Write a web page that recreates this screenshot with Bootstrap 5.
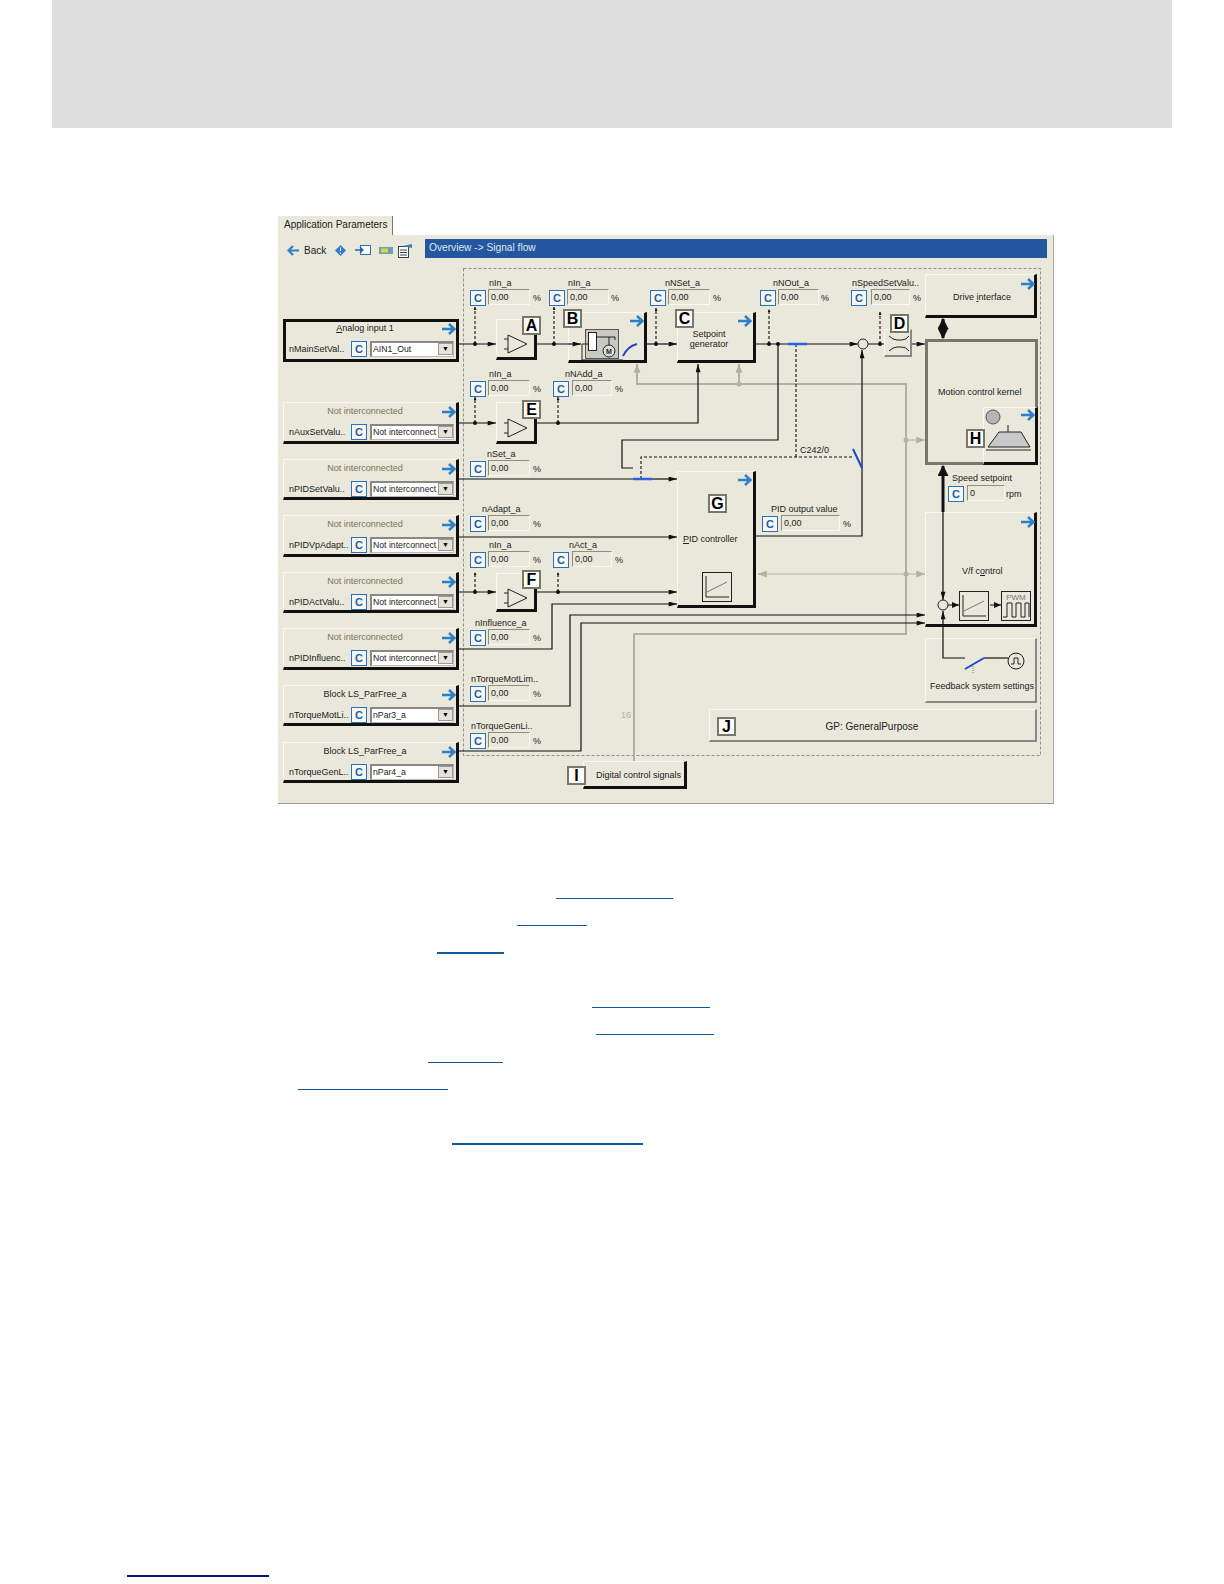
<!DOCTYPE html>
<html lang="en">
<head>
  <meta charset="UTF-8">
  <meta name="viewport" content="width=device-width, initial-scale=1.0">
  <title>Signal flow</title>
  <link rel="stylesheet" href="https://cdn.jsdelivr.net/npm/bootstrap@5.3.2/dist/css/bootstrap.min.css">
  <style>
    body { background: #fff; font-family: "Liberation Sans", Arial, sans-serif; }
    .top-band { height: 128px; margin: 0 52px; background: #dfdfdf; }
    .sf-window { width: 776px; margin: 88px 0 0 278px; }
    .sf-tabs { border: 0; }
    .sf-tabs .nav-link, .sf-tabs .nav-link.active { height: 19px; width: 115px; margin: 0; padding: 1px 0 0 6px; font-size: 10px; line-height: 16px; color: #222; background: #e9e8da; border: 0; border-right: 1.5px solid #777; border-radius: 0; white-space: nowrap; }
    .sf-panel { height: 569px; background: #e9e8da; border-right: 1px solid #aaa; border-bottom: 1px solid #999; }
    .sf-toolbar { height: 23px; padding-top: 4px; }
    .sf-tools { width: 147px; height: 19px; padding: 3px 0 0 9px; font-size: 10px; color: #222; }
    .sf-title { height: 19px; margin-right: 6px; padding-left: 4px; background: #2557a0; color: #dfe6f0; font-size: 10.2px; line-height: 18px; }
    .sf-layer { left: 0; top: 0; width: 776px; height: 569px; }
    .sf-node { font-size: 9px; line-height: 11px; color: #222; white-space: nowrap; }
    .sf-big { font-size: 10px; }
    .sf-block { background: #e9e8da; border-top: 1px solid #f8f8f0; border-left: 1px solid #f8f8f0; border-right: 3px solid #111; border-bottom: 3px solid #111; }
    .sf-closed { border-top: 3px solid #111; border-left: 3px solid #111; }
    .sf-flat { background: #e9e8da; border: 1px solid #f8f8f0; border-right: 2px solid #888; border-bottom: 2px solid #888; }
    .sf-kernel { background: #e9e8da; border: 3px solid #77776c; }
    .sf-letter { width: 19px; height: 19px; background: #fbfbf8; border: 2px solid #77776c; font-size: 16px; line-height: 15px; font-weight: 700; color: #000; text-align: center; }
    .sf-cbox { width: 16px; height: 16px; background: #f6f7f3; border: 1px solid #2b70b8; color: #1c5fa8; font-size: 11px; line-height: 14px; font-weight: 700; text-align: center; }
    .sf-field { height: 16px; padding-left: 2px; background: #e9e8da; border-top: 1px solid #8f8f80; border-left: 1px solid #8f8f80; border-right: 1px solid #f8f8f0; border-bottom: 1px solid #f8f8f0; font-size: 9px; line-height: 15px; color: #222; }
    .sf-select { width: 84px; height: 16px; padding-left: 1px; background: #fff; border-top: 2px solid #888; border-left: 2px solid #888; border-bottom: 1px solid #bbb; border-right: 1px solid #bbb; font-size: 8.7px; line-height: 12px; color: #222; white-space: nowrap; }
    .sf-value { flex: 1 1 auto; }
    .sf-drop { flex: 0 0 15px; height: 12px; background: #e4e3d6; border: 1px solid #999; color: #000; font-size: 7px; line-height: 10px; text-align: center; }
    .sf-muted { color: #77775a; }
    .link-stack { height: 248px; position: relative; }
    .link-rule { background: #0f5a9c; }
    .page-rule { width: 142px; height: 2px; margin: 523px 0 0 127px; background: #10107a; }
    svg text { font-family: "Liberation Sans", Arial, sans-serif; }
    .w { fill: none; stroke: #111; stroke-width: 1.2; }
    .d { fill: none; stroke: #111; stroke-width: 1.1; stroke-dasharray: 3 2; }
    .g { fill: none; stroke: #b0b0a4; stroke-width: 2; }
    .gt { fill: none; stroke: #b0b0a4; stroke-width: 1; }
    .t { fill: none; stroke: #111; stroke-width: 3; }
    .b { fill: none; stroke: #1f45d0; stroke-width: 2; }
    .i { fill: none; stroke: #222; stroke-width: 1; }
  </style>
</head>
<body>
  <div class="top-band"></div>

  <div class="sf-window">
    <ul class="nav nav-tabs sf-tabs">
      <li class="nav-item"><a class="nav-link active" href="#">Application Parameters</a></li>
    </ul>
    <div class="sf-panel position-relative">
      <div class="sf-toolbar d-flex">
        <div class="sf-tools d-flex align-items-center gap-1">
          <svg width="13" height="11" viewBox="0 0 13 11"><path d="M12 5.5H3M6 1L1.5 5.5L6 10" fill="none" stroke="#2f7fc8" stroke-width="2.2"/></svg>
          <span>Back</span>
          <svg class="ms-1" width="13" height="13" viewBox="0 0 13 13"><path d="M6.5 1L12 6.5L6.5 12L1 6.5z" fill="#2f7fc8"/><path d="M6.5 3.5V7M6.5 8.5V10" stroke="#fff"/></svg>
          <svg class="ms-1" width="16" height="12" viewBox="0 0 16 12"><rect x="5.5" y="1.5" width="10" height="9" fill="#fff" stroke="#2f6fa8"/><path d="M0 6H8M5 3L8 6L5 9" fill="none" stroke="#1d6aa8" stroke-width="1.3"/></svg>
          <svg class="ms-1" width="14" height="7" viewBox="0 0 14 7"><rect width="14" height="7" fill="#6f9fb8"/><rect x="2" y="1.5" width="7" height="4" fill="#d8d840"/></svg>
          <svg width="16" height="15" viewBox="0 0 16 15"><rect x="1.5" y="3.5" width="10" height="11" fill="#fff" stroke="#345"/><path d="M3 7H10M3 9.5H10M3 12H10" stroke="#345"/><path d="M6 3L15 1V5z" fill="#3a80b8"/></svg>
        </div>
        <div class="sf-title flex-grow-1">Overview -&gt; Signal flow</div>
      </div>

      <svg class="sf-layer position-absolute" viewBox="278 235 776 569">
        <defs>
          <marker id="ah" viewBox="0 0 10 6" refX="10" refY="3" markerWidth="9" markerHeight="5" markerUnits="userSpaceOnUse" orient="auto-start-reverse"><path d="M0 0L10 3L0 6z" fill="#111"/></marker>
          <marker id="as" viewBox="0 0 6 8" refX="6" refY="3" markerWidth="6" markerHeight="4" markerUnits="userSpaceOnUse" orient="auto"><path d="M0 0L6 3L0 6z" fill="#111"/></marker>
          <marker id="at" viewBox="0 0 10 10" refX="9" refY="5" markerWidth="11" markerHeight="11" markerUnits="userSpaceOnUse" orient="auto-start-reverse"><path d="M0 0L10 5L0 10z" fill="#111"/></marker>
          <marker id="ag" viewBox="0 0 10 8" refX="10" refY="4" markerWidth="9" markerHeight="7" markerUnits="userSpaceOnUse" orient="auto-start-reverse"><path d="M0 0L10 4L0 8z" fill="#b0b0a4"/></marker>
        </defs>
        <rect x="463.5" y="268.5" width="577" height="487" fill="none" stroke="#777" stroke-width=".8" stroke-dasharray="3 2"/>

        <!-- grey bus -->
        <path class="g" d="M634 761V634H906V384H637V364" marker-end="url(#ag)"/>
        <path class="g" d="M739 384V364" marker-end="url(#ag)"/>
        <path class="gt" d="M906 440H925" marker-end="url(#ag)"/>
        <path class="gt" d="M758 574H925" marker-start="url(#ag)" marker-end="url(#ag)"/>
        <g fill="#b0b0a4"><circle cx="739" cy="384" r="2.5"/><circle cx="906" cy="440" r="2.5"/><circle cx="906" cy="574" r="2.5"/></g>
        <text x="621" y="718" font-size="9" fill="#b0b0a4">16</text>

        <!-- main signal path -->
        <path class="w" d="M459 344H496" marker-end="url(#ah)"/>
        <path class="w" d="M537 344H582"/>
        <path class="w" d="M647 344H677" marker-end="url(#ah)"/>
        <path class="w" d="M756 344H858" marker-end="url(#ah)"/>
        <path class="w" d="M868 344H925" marker-end="url(#ah)"/>
        <path class="d" d="M475 344V307" marker-end="url(#as)"/>
        <path class="d" d="M554 344V307" marker-end="url(#as)"/>
        <path class="d" d="M656 344V308" marker-end="url(#as)"/>
        <path class="d" d="M769 344V309" marker-end="url(#as)"/>
        <path class="d" d="M880 344V312" marker-end="url(#as)"/>
        <path class="w" d="M778 344V440H622V468H633"/>
        <path class="d" d="M796 344V457M641 479V457H854"/>

        <!-- second line -->
        <path class="w" d="M459 423H496" marker-end="url(#ah)"/>
        <path class="d" d="M475 423V397" marker-end="url(#as)"/>
        <path class="w" d="M537 423H698V364" marker-end="url(#ah)"/>
        <path class="d" d="M558 423V397" marker-end="url(#as)"/>

        <!-- PID inputs -->
        <path class="w" d="M459 479H633"/>
        <path class="w" d="M652 479H677" marker-end="url(#ah)"/>
        <path class="w" d="M459 537H677" marker-end="url(#ah)"/>
        <path class="w" d="M459 592H496" marker-end="url(#ah)"/>
        <path class="d" d="M475 592V572" marker-end="url(#as)"/>
        <path class="w" d="M537 592H677" marker-end="url(#ah)"/>
        <path class="d" d="M558 592V572" marker-end="url(#as)"/>
        <path class="w" d="M459 649H552V604H677" marker-end="url(#ah)"/>
        <path class="w" d="M459 706H570V615H925" marker-end="url(#ah)"/>
        <path class="w" d="M459 751H581V623H925" marker-end="url(#ah)"/>
        <path class="w" d="M756 536H862V350" marker-end="url(#ah)"/>

        <!-- motor side -->
        <path class="t" d="M943 319V338" marker-start="url(#at)" marker-end="url(#at)"/>
        <path class="t" d="M943 512V466" marker-end="url(#at)"/>

        <g fill="#111">
          <circle cx="475" cy="344" r="2"/><circle cx="554" cy="344" r="2"/><circle cx="656" cy="344" r="2"/><circle cx="769" cy="344" r="2"/><circle cx="778" cy="344" r="2"/><circle cx="880" cy="344" r="2"/>
          <circle cx="475" cy="423" r="2"/><circle cx="558" cy="423" r="2"/><circle cx="475" cy="592" r="2"/><circle cx="558" cy="592" r="2"/>
        </g>
        <path d="M788 344H807M633 479H652" stroke="#2f62e0" stroke-width="2.4"/>
        <path class="b" d="M853 449L862 468"/>
        <text x="800" y="453" font-size="9" fill="#222">C242/0</text>
        <circle cx="863" cy="344" r="5" fill="#e9e8da" stroke="#222"/>
      </svg>

      <div id="nodes"></div>

      <svg class="sf-layer position-absolute pe-none" viewBox="278 235 776 569">
        <defs>
          <symbol id="tri" viewBox="0 0 24 20" width="24" height="20"><path d="M4 1L23 10L4 19z" fill="none" stroke="#222"/><path d="M0 5H4M0 15H4" stroke="#222"/></symbol>
          <symbol id="chart" viewBox="0 0 30 30" width="30" height="30"><rect x=".5" y=".5" width="29" height="29" fill="none" stroke="#222"/><path d="M4 4V25H27" fill="none" stroke="#222"/><path d="M5 20L25 10" stroke="#777"/></symbol>
        </defs>
        <use href="#tri" x="504" y="334"/>
        <use href="#tri" x="504" y="418"/>
        <use href="#tri" x="504" y="588"/>

        <!-- B: motor block -->
        <path class="w" d="M568 344H581" marker-end="url(#ah)"/>
        <path class="i" d="M582 344V360H623"/>
        <rect x="585.5" y="329.5" width="33" height="29" fill="#c9c9c4" stroke="#555"/>
        <rect x="588.5" y="332.5" width="8" height="18" fill="#fff" stroke="#222"/>
        <path class="i" d="M597 337H615M609 337V345M615 337V340M582 344H588"/>
        <circle cx="609" cy="351" r="6" fill="#ddd" stroke="#222"/>
        <text x="609" y="354" font-size="7" font-weight="700" text-anchor="middle" fill="#222">M</text>
        <path d="M623 356Q628 346 637 344" fill="none" stroke="#1f45d0" stroke-width="1.8"/>

        <!-- D: ramp limiter -->
        <path class="i" d="M889 336Q893 340 897 340H902Q906 340 909 336M889 351Q893 347 897 347H902Q906 347 909 351"/>

        <!-- H: brake -->
        <circle cx="993" cy="417" r="7" fill="#b5b5b5" stroke="#555"/>
        <path d="M1008 425V432M988 447L999 432H1021L1030 447z" fill="#c9c9c9" stroke="#222"/>
        <path class="i" d="M986 450H1031"/>

        <!-- G / V/f charts -->
        <use href="#chart" x="702" y="572"/>
        <use href="#chart" x="959" y="591"/>
        <rect x="1001.5" y="591.5" width="29" height="29" fill="none" stroke="#222"/>
        <text x="1016" y="600" font-size="8" text-anchor="middle" fill="#777">PWM</text>
        <path class="i" d="M1003 617H1007V603H1012V617H1016V603H1021V617H1025V603H1029V617"/>
        <path class="w" d="M943 512V600" marker-end="url(#ah)"/>
        <circle cx="943" cy="605" r="5" fill="#e9e8da" stroke="#222"/>
        <path d="M948 605H959M990 605H1001" stroke="#111"/>
        <path d="M952 602L959 605L952 608zM994 602L1001 605L994 608z" fill="#111"/>

        <!-- Feedback -->
        <path class="w" d="M965 658H943V611" marker-end="url(#ah)"/>
        <path class="w" d="M984 658H1008"/>
        <path class="b" d="M965 669L984 658"/>
        <path d="M973 666V674" stroke="#777" stroke-dasharray="1 1"/>
        <circle cx="1016" cy="661" r="8" fill="none" stroke="#222"/>
        <path class="i" d="M1011 664H1014V658H1018V664H1021"/>
      </svg>
    </div>
  </div>

  <div class="link-stack" id="links"></div>
  <div class="page-rule"></div>

  <svg width="0" height="0" class="position-absolute">
    <symbol id="go" viewBox="0 0 14 12"><path d="M0 6H12M7 1L12.5 6L7 11" fill="none" stroke="#2f7fc8" stroke-width="2.5"/></symbol>
  </svg>

  <script>
    const OX = 278, OY = 235;
    const esc = s => s.replace(/&/g, "&amp;");
    const at = (x, y, extra = "") => `left:${x - OX}px;top:${y - OY}px;${extra}`;
    const arrow = (x, y) => `<svg class="position-absolute" width="14" height="12" style="${at(x, y - 6)}"><use href="#go"/></svg>`;
    const letter = (ch, x, y) => `<div class="sf-letter position-absolute" style="${at(x, y)}">${ch}</div>`;
    const text = (str, x, y, cls = "") => `<div class="sf-node position-absolute ${cls}" style="${at(x, y - 5)}">${str}</div>`;
    const ctext = (str, cx, y, cls = "") => `<div class="sf-node position-absolute text-center ${cls}" style="${at(cx - 60, y - 5, "width:120px;")}">${str}</div>`;
    const box = (cls, x1, y1, x2, y2) => `<div class="${cls} position-absolute" style="${at(x1, y1, `width:${x2 - x1}px;height:${y2 - y1}px;`)}"></div>`;

    // left hand input panels: top, bottom, title, name, select value, title class
    const panels = [
      [319, 362, "<u>A</u>nalog input 1", "nMainSetVal..", "AIN1_Out", ""],
      [402, 444, "Not interconnected", "nAuxSetValu..", "Not interconnect", "sf-muted"],
      [459, 500, "Not interconnected", "nPIDSetValu..", "Not interconnect", "sf-muted"],
      [515, 557, "Not interconnected", "nPIDVpAdapt..", "Not interconnect", "sf-muted"],
      [572, 613, "Not interconnected", "nPIDActValu..", "Not interconnect", "sf-muted"],
      [628, 670, "Not interconnected", "nPIDInfluenc..", "Not interconnect", "sf-muted"],
      [685, 726, "Block LS_ParFree_a", "nTorqueMotLi..", "nPar3_a", ""],
      [742, 783, "Block LS_ParFree_a", "nTorqueGenL..", "nPar4_a", ""]
    ];

    // value fields: label, label x, label y, C x, C top, field x, field width, unit, unit x
    const fields = [
      ["nIn_a", 489, 283, 470, 290, 488, 42, "%", 533],
      ["nIn_a", 568, 283, 549, 290, 567, 42, "%", 611],
      ["nNSet_a", 665, 283, 650, 290, 668, 42, "%", 713],
      ["nNOut_a", 773, 283, 760, 290, 778, 41, "%", 821],
      ["nSpeedSetValu..", 852, 283, 851, 290, 871, 39, "%", 913],
      ["nIn_a", 489, 374, 470, 381, 488, 42, "%", 533],
      ["nNAdd_a", 565, 374, 553, 381, 572, 40, "%", 615],
      ["nSet_a", 487, 454, 470, 461, 488, 42, "%", 533],
      ["nAdapt_a", 482, 509, 470, 516, 488, 42, "%", 533],
      ["nIn_a", 489, 545, 470, 552, 488, 42, "%", 533],
      ["nAct_a", 569, 545, 553, 552, 572, 40, "%", 615],
      ["nInfluence_a", 475, 623, 470, 630, 488, 42, "%", 533],
      ["nTorqueMotLim..", 471, 679, 470, 686, 488, 42, "%", 533],
      ["nTorqueGenLi..", 471, 726, 470, 733, 488, 42, "%", 533],
      ["Speed setpoint", 952, 478, 948, 486, 967, 38, "rpm", 1006, "0"],
      ["PID output value", 771, 509, 762, 516, 781, 59, "%", 843]
    ];

    let html = "";

    panels.forEach(([top, bottom, title, name, value, titleCls], i) => {
      html += box(i === 0 ? "sf-block sf-closed" : "sf-block", 283, top, 459, bottom);
      html += ctext(title, 365, top + 9, titleCls);
      html += arrow(442, top + 10);
      html += text(name, 289, top + 30);
      html += `<div class="sf-cbox position-absolute" style="${at(351, top + 22)}">C</div>`;
      html += `<div class="sf-select position-absolute d-flex" style="${at(370, top + 22)}"><span class="sf-value">${value}</span><span class="sf-drop">&#9660;</span></div>`;
    });

    // blocks that sit over the wires
    html += box("sf-block", 496, 319, 537, 360) + box("sf-block", 496, 402, 537, 444) + box("sf-block", 496, 573, 537, 612);
    html += box("sf-block", 568, 312, 647, 363) + box("sf-block", 677, 312, 756, 363) + box("sf-block", 677, 471, 756, 608);
    html += box("sf-flat", 884, 329, 912, 357);
    html += box("sf-block", 925, 274, 1037, 318);
    html += box("sf-kernel", 925, 339, 1038, 465);
    html += box("sf-block", 983, 407, 1038, 465);
    html += box("sf-block", 925, 512, 1037, 627);
    html += box("sf-flat", 925, 638, 1037, 703);
    html += box("sf-flat", 709, 709, 1037, 742);
    html += box("sf-block", 583, 761, 687, 789);

    html += letter("A", 522, 316) + letter("E", 522, 400) + letter("F", 522, 570) + letter("B", 563, 309) + letter("C", 675, 309);
    html += letter("D", 890, 314) + letter("G", 708, 494) + letter("H", 966, 429) + letter("I", 567, 766) + letter("J", 717, 717);

    html += arrow(630, 321) + arrow(738, 321) + arrow(738, 480) + arrow(1021, 284) + arrow(1021, 415) + arrow(1021, 522);

    html += ctext("Setpoint", 709, 334) + ctext("<u>g</u>enerator", 709, 344);
    html += ctext("Drive <u>i</u>nterface", 982, 297);
    html += text("Motion control kernel", 938, 392);
    html += text("<u>P</u>ID controller", 683, 539);
    html += text("V/f c<u>o</u>ntrol", 962, 571);
    html += ctext("Feedback system settings", 982, 686);
    html += ctext("GP: GeneralPurpose", 872, 726, "sf-big");
    html += text("Digital control signals", 596, 775);

    for (const [label, lx, ly, cx, cy, fx, fw, unit, ux, val] of fields) {
      html += text(esc(label), lx, ly);
      html += `<div class="sf-cbox position-absolute" style="${at(cx, cy)}">C</div>`;
      html += `<div class="sf-field position-absolute" style="${at(fx, cy - 1, `width:${fw}px;`)}">${val || "0,00"}</div>`;
      html += text(unit, ux, cy + 8);
    }

    document.getElementById("nodes").innerHTML = html;

    // blue link underlines under the picture: left, right, top, thickness
    const rules = [
      [556, 673, 898, 1], [517, 587, 925, 1], [437, 504, 952, 2], [592, 710, 1007, 1],
      [596, 714, 1034, 1], [428, 503, 1062, 1], [298, 448, 1089, 1], [452, 643, 1143, 2]
    ];
    document.getElementById("links").innerHTML = rules.map(([l, r, y, h]) =>
      `<div class="link-rule position-absolute" style="left:${l}px;top:${y - 804}px;width:${r - l}px;height:${h}px"></div>`).join("");
  </script>
</body>
</html>
